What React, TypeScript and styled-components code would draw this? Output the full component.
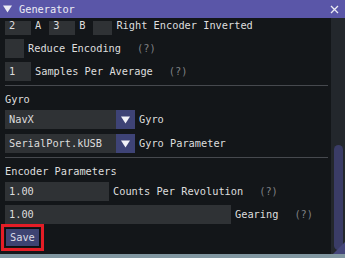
import React from "react";
import styled, { createGlobalStyle } from "styled-components";

const GlobalStyle = createGlobalStyle`
  html, body {
    margin: 0;
    padding: 0;
    background: #8197a1;
  }
  body {
    font-family: "DejaVu Sans Mono", "Liberation Mono", monospace;
    font-size: 10.3px;
    color: #dedede;
  }
`;

const App = () => {
  return (
    <>
      <GlobalStyle />
      <Window>
        <TitleBar>
          <svg width="9" height="8" viewBox="0 0 9 8">
            <polygon points="0,0.5 9,0.5 4.5,7.5" fill="#ececf4" />
          </svg>
          <Title>Generator</Title>
          <CloseIcon width="9" height="9" viewBox="0 0 9 9">
            <path d="M1 1 L8 8 M8 1 L1 8" stroke="#ececf4" strokeWidth="1.3" />
          </CloseIcon>
        </TitleBar>
        <Body>
          <Main>
            <Clip>
              <Content>
                <Row $top={0}>
                  <Frame $w={26}>2</Frame>
                  <Label>A</Label>
                  <Frame $w={26} $ml={8}>3</Frame>
                  <Label>B</Label>
                  <Checkbox $ml={8} />
                  <Label>Right Encoder Inverted</Label>
                </Row>
                <Row>
                  <Checkbox />
                  <Label>Reduce Encoding</Label>
                  <Help>(?)</Help>
                </Row>
                <Row>
                  <Frame $w={26}>1</Frame>
                  <Label>Samples Per Average</Label>
                  <Help>(?)</Help>
                </Row>
                <Separator />
                <Heading>Gyro</Heading>
                <Row>
                  <Frame $w={111}>NavX</Frame>
                  <ComboArrow>
                    <svg width="9" height="8" viewBox="0 0 9 8">
                      <polygon points="0,0.5 9,0.5 4.5,7.5" fill="#f2f2f8" />
                    </svg>
                  </ComboArrow>
                  <Label>Gyro</Label>
                </Row>
                <Row $top={5}>
                  <Frame $w={111}>SerialPort.kUSB</Frame>
                  <ComboArrow>
                    <svg width="9" height="8" viewBox="0 0 9 8">
                      <polygon points="0,0.5 9,0.5 4.5,7.5" fill="#f2f2f8" />
                    </svg>
                  </ComboArrow>
                  <Label>Gyro Parameter</Label>
                </Row>
                <Separator />
                <Heading>Encoder Parameters</Heading>
                <Row>
                  <Frame $w={104}>1.00</Frame>
                  <Label>Counts Per Revolution</Label>
                  <Help>(?)</Help>
                </Row>
                <Row>
                  <Frame $w={226}>1.00</Frame>
                  <Label>Gearing</Label>
                  <Help>(?)</Help>
                </Row>
                <Row>
                  <SaveButton>Save</SaveButton>
                </Row>
              </Content>
            </Clip>
          </Main>
          <Scrollbar>
            <Grab />
          </Scrollbar>
          <ResizeGrip />
        </Body>
      </Window>
    </>
  );
};

export default App;

const Window = styled.div`
  width: 345px;
  height: 254px;
  background: #131619;
  display: flex;
  flex-direction: column;
`;

const TitleBar = styled.div`
  height: 18px;
  background: #5a56a8;
  display: flex;
  align-items: center;
  padding-left: 3px;
  flex-shrink: 0;
`;

const Title = styled.span`
  margin-left: 7px;
  color: #ececf4;
  line-height: 18px;
`;

const CloseIcon = styled.svg`
  margin-left: auto;
  margin-right: 6px;
`;

const Body = styled.div`
  position: relative;
  flex: 1;
  min-height: 0;
  display: flex;
`;

const Main = styled.div`
  width: 331px;
  padding-top: 3px;
  display: flex;
  flex-direction: column;
`;

const Clip = styled.div`
  flex: 1;
  overflow: hidden;
`;

const Content = styled.div`
  margin-top: -5px;
  padding-left: 5px;
  padding-right: 3px;
`;

const Row = styled.div<{ $top?: number }>`
  display: flex;
  align-items: center;
  height: 19px;
  margin-top: ${(p) => (p.$top ?? 4)}px;
  white-space: pre;
`;

const Frame = styled.div<{ $w: number; $ml?: number }>`
  width: ${(p) => p.$w}px;
  height: 19px;
  line-height: 19px;
  box-sizing: border-box;
  padding: 0 4px;
  margin-left: ${(p) => p.$ml ?? 0}px;
  background: #2f3235;
  color: #dcdcdc;
  flex-shrink: 0;
`;

const Checkbox = styled.div<{ $ml?: number }>`
  width: 19px;
  height: 19px;
  margin-left: ${(p) => p.$ml ?? 0}px;
  background: #2f3235;
  flex-shrink: 0;
`;

const Label = styled.span`
  margin-left: 4px;
  line-height: 19px;
`;

const Help = styled.span`
  margin-left: 16px;
  color: #7f8083;
  line-height: 19px;
`;

const ComboArrow = styled.div`
  width: 19px;
  height: 19px;
  background: #3e4376;
  display: flex;
  align-items: center;
  justify-content: center;
  flex-shrink: 0;
`;

const Separator = styled.div`
  height: 1px;
  background: #46494e;
  margin-top: 4px;
`;

const Heading = styled.div`
  height: 13px;
  line-height: 13px;
  margin-top: 7px;
`;

const SaveButton = styled.div`
  height: 19px;
  line-height: 17px;
  box-sizing: border-box;
  padding: 0 4px;
  background: #3e4372;
  border: 1px solid #0d0f12;
  color: #dcdce6;
  outline: 3px solid #e51d26;
  outline-offset: 1px;
`;

const Scrollbar = styled.div`
  width: 14px;
  background: #23272c;
  display: flex;
  flex-direction: column;
  justify-content: flex-end;
  align-items: center;
  padding-bottom: 4px;
`;

const Grab = styled.div`
  width: 9px;
  height: 105px;
  border-radius: 5px;
  background: #3a3c66;
`;

const ResizeGrip = styled.div`
  position: absolute;
  right: 0;
  bottom: 0;
  width: 0;
  height: 0;
  border-left: 12px solid transparent;
  border-bottom: 12px solid #44467a;
`;
